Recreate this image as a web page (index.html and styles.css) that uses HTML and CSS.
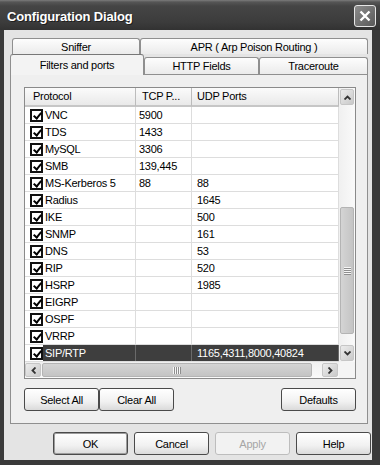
FILE: index.html
```html
<!DOCTYPE html>
<html lang="en">
<head>
  <meta charset="UTF-8">
  <title>Configuration Dialog</title>
  <link rel="stylesheet" href="styles.css">
</head>
<body>

  <div class="titlebar">
    <span class="title">Configuration Dialog</span>
    <div class="close">
      <svg width="12" height="12" viewBox="0 0 12 12"><path d="M1.5 1.5 L10.5 10.5 M10.5 1.5 L1.5 10.5" stroke="#fff" stroke-width="2.4" fill="none"/></svg>
    </div>
  </div>

  <div class="client">
    <div class="tabs">
      <div class="tab-row tab-row-back">
        <div class="tab tab-sniffer">Sniffer</div>
        <div class="tab tab-apr">APR ( Arp Poison Routing )</div>
      </div>
      <div class="tab-row tab-row-front">
        <div class="tab tab-filters">Filters and ports</div>
        <div class="tab tab-http">HTTP Fields</div>
        <div class="tab tab-trace">Traceroute</div>
      </div>
    </div>

    <div class="panel">
      <div class="list">
        <div class="view">
          <div class="list-head">
            <div class="head-cell head-name">Protocol</div>
            <div class="head-cell head-tcp">TCP P...</div>
            <div class="head-cell head-udp">UDP Ports</div>
          </div>

          <div class="row"><div class="cell cell-name"><span class="check"></span><span class="label">VNC</span></div><div class="cell cell-tcp">5900</div><div class="cell cell-udp"></div></div>
          <div class="row"><div class="cell cell-name"><span class="check"></span><span class="label">TDS</span></div><div class="cell cell-tcp">1433</div><div class="cell cell-udp"></div></div>
          <div class="row"><div class="cell cell-name"><span class="check"></span><span class="label">MySQL</span></div><div class="cell cell-tcp">3306</div><div class="cell cell-udp"></div></div>
          <div class="row"><div class="cell cell-name"><span class="check"></span><span class="label">SMB</span></div><div class="cell cell-tcp">139,445</div><div class="cell cell-udp"></div></div>
          <div class="row"><div class="cell cell-name"><span class="check"></span><span class="label">MS-Kerberos 5</span></div><div class="cell cell-tcp">88</div><div class="cell cell-udp">88</div></div>
          <div class="row"><div class="cell cell-name"><span class="check"></span><span class="label">Radius</span></div><div class="cell cell-tcp"></div><div class="cell cell-udp">1645</div></div>
          <div class="row"><div class="cell cell-name"><span class="check"></span><span class="label">IKE</span></div><div class="cell cell-tcp"></div><div class="cell cell-udp">500</div></div>
          <div class="row"><div class="cell cell-name"><span class="check"></span><span class="label">SNMP</span></div><div class="cell cell-tcp"></div><div class="cell cell-udp">161</div></div>
          <div class="row"><div class="cell cell-name"><span class="check"></span><span class="label">DNS</span></div><div class="cell cell-tcp"></div><div class="cell cell-udp">53</div></div>
          <div class="row"><div class="cell cell-name"><span class="check"></span><span class="label">RIP</span></div><div class="cell cell-tcp"></div><div class="cell cell-udp">520</div></div>
          <div class="row"><div class="cell cell-name"><span class="check"></span><span class="label">HSRP</span></div><div class="cell cell-tcp"></div><div class="cell cell-udp">1985</div></div>
          <div class="row"><div class="cell cell-name"><span class="check"></span><span class="label">EIGRP</span></div><div class="cell cell-tcp"></div><div class="cell cell-udp"></div></div>
          <div class="row"><div class="cell cell-name"><span class="check"></span><span class="label">OSPF</span></div><div class="cell cell-tcp"></div><div class="cell cell-udp"></div></div>
          <div class="row"><div class="cell cell-name"><span class="check"></span><span class="label">VRRP</span></div><div class="cell cell-tcp"></div><div class="cell cell-udp"></div></div>
          <div class="row row-selected"><div class="cell cell-name"><span class="check"></span><span class="label">SIP/RTP</span></div><div class="cell cell-tcp"></div><div class="cell cell-udp">1165,4311,8000,40824</div></div>
        </div>

        <div class="vscroll">
          <div class="sb-btn sb-btn-v">
            <svg width="7" height="5" viewBox="0 0 7 5"><polyline points="0.5,4.5 3.5,1.5 6.5,4.5" stroke="#333" stroke-width="1.8" fill="none"/></svg>
          </div>
          <div class="thumb-v"><span class="grip-v"></span></div>
          <div class="sb-btn sb-btn-v sb-down">
            <svg width="7" height="5" viewBox="0 0 7 5"><polyline points="0.5,0.5 3.5,3.5 6.5,0.5" stroke="#333" stroke-width="1.8" fill="none"/></svg>
          </div>
        </div>

        <div class="hscroll">
          <div class="sb-btn sb-btn-h sb-left">
            <svg width="5" height="7" viewBox="0 0 5 7"><polyline points="4.5,0.5 1.5,3.5 4.5,6.5" stroke="#333" stroke-width="1.8" fill="none"/></svg>
          </div>
          <div class="thumb-h"><span class="grip-h"></span></div>
          <div class="sb-btn sb-btn-h sb-right">
            <svg width="5" height="7" viewBox="0 0 5 7"><polyline points="0.5,0.5 3.5,3.5 0.5,6.5" stroke="#333" stroke-width="1.8" fill="none"/></svg>
          </div>
        </div>
        <div class="corner"></div>
      </div>

      <div class="panel-actions">
        <button class="btn">Select All</button>
        <button class="btn">Clear All</button>
        <button class="btn btn-push">Defaults</button>
      </div>
    </div>

    <div class="dialog-actions">
      <button class="btn btn-default">OK</button>
      <button class="btn">Cancel</button>
      <button class="btn btn-disabled">Apply</button>
      <button class="btn">Help</button>
    </div>
  </div>

</body>
</html>
```

FILE: styles.css
```css
* {
  box-sizing: border-box;
}

body {
  margin: 0;
  width: 380px;
  height: 465px;
  overflow: hidden;
  background-color: #3a3a3a;
  font-family: "Liberation Sans", Arial, sans-serif;
  font-size: 11px;
  letter-spacing: -0.25px;
  color: #000;
}

/* title bar */
.titlebar {
  height: 30px;
  display: flex;
  align-items: center;
  justify-content: space-between;
  padding: 0 4px 0 7px;
  background: linear-gradient(#7c7c7c 0, #565656 2px, #454545 6px, #3c3c3c 22px, #323232 30px);
}

.title {
  color: #fff;
  font-weight: bold;
  font-size: 13px;
  letter-spacing: -0.15px;
  padding-top: 2px;
  text-shadow: 1px 1px 0 #1e1e1e;
}

.close {
  width: 22px;
  height: 22px;
  margin-top: 2px;
  border: 1px solid #e6e6e6;
  border-radius: 3px;
  background: linear-gradient(135deg, #8c8c8c, #595959);
  display: flex;
  align-items: center;
  justify-content: center;
}

/* window body */
.client {
  height: 430px;
  margin: 0 8px 0 4px;
  padding: 8px 4px 0 6px;
  background-color: #e4e4e4;
}

/* tabs */
.tabs {
  width: 358px;
}

.tab-row {
  display: flex;
}

.tab-row-back {
  height: 16px;
  padding-left: 2px;
}

.tab-row-front {
  height: 20px;
  align-items: flex-end;
  position: relative;
  z-index: 1;
}

.tab {
  display: flex;
  align-items: center;
  justify-content: center;
  border: 1px solid #8f8f8f;
  border-bottom: none;
  border-radius: 3px 3px 0 0;
  background: linear-gradient(#fdfdfd, #ebebeb);
  white-space: nowrap;
}

.tab-row-back .tab {
  height: 16px;
}

.tab-sniffer {
  width: 128px;
}

.tab-apr {
  width: 228px;
}

.tab-filters {
  width: 134px;
  height: 21px;
  margin-bottom: -1px;
  background: #f3f3f3;
  border-top-color: #777;
}

.tab-http {
  width: 115px;
  height: 17px;
}

.tab-trace {
  width: 109px;
  height: 17px;
}

.panel {
  height: 350px;
  border: 1px solid #8f8f8f;
  background-color: #efefef;
  padding: 12px 11px 0 13px;
}

/* list view */
.list {
  width: 332px;
  height: 292px;
  border: 1px solid #8a8a8a;
  background-color: #fff;
  display: grid;
  grid-template-columns: 314px 16px;
  grid-template-rows: 274px 16px;
}

.view {
  overflow: hidden;
}

.list-head,
.row {
  display: grid;
  grid-template-columns: 111px 56px 147px;
}

.list-head {
  height: 19px;
}

.head-cell {
  line-height: 17px;
  background: linear-gradient(#fbfbfb, #e9e9e9);
  border-right: 1px solid #bcbcbc;
  border-bottom: 2px solid #c6c6c6;
  white-space: nowrap;
}

.head-name {
  padding-left: 8px;
}

.head-tcp {
  padding-left: 6px;
}

.head-udp {
  padding-left: 5px;
}

.row {
  height: 17px;
  border-bottom: 1px solid #dddddd;
}

.cell {
  line-height: 16px;
  border-right: 1px solid #dddddd;
  white-space: nowrap;
  overflow: hidden;
}

.cell-name {
  display: flex;
  align-items: center;
  padding-left: 5px;
}

.cell-tcp {
  padding-left: 3px;
}

.cell-udp {
  padding-left: 5px;
}

.check {
  position: relative;
  flex: none;
  width: 13px;
  height: 13px;
  border: 2px solid #111;
  background-color: #fff;
}

.check::after {
  content: "";
  position: absolute;
  left: 3px;
  top: 0;
  width: 3px;
  height: 6px;
  border: solid #000;
  border-width: 0 2px 2px 0;
  transform: rotate(40deg);
}

.label {
  flex: 1;
  align-self: stretch;
  padding-left: 2px;
}

.row-selected .label,
.row-selected .cell-tcp,
.row-selected .cell-udp {
  background-color: #3e3e3e;
  color: #fff;
}

.row-selected .cell {
  border-right-color: #6a6a6a;
}

/* scroll bars */
.vscroll {
  display: flex;
  flex-direction: column;
  padding: 1px;
  background: linear-gradient(90deg, #f0f0f0, #fafafa);
}

.hscroll {
  display: flex;
  padding: 1px 0 1px 0;
  background: linear-gradient(#f0f0f0, #fafafa);
}

.corner {
  background-color: #f4f4f4;
}

.sb-btn {
  display: flex;
  align-items: center;
  justify-content: center;
  border: 1px solid #c6c6c6;
  border-radius: 2px;
  background: linear-gradient(135deg, #ececec, #c9c9c9);
}

.sb-btn-v {
  height: 16px;
}

.sb-down {
  margin-top: auto;
}

.sb-btn-h {
  width: 16px;
}

.sb-right {
  margin-left: auto;
  margin-right: 1px;
}

.thumb-v {
  height: 127px;
  margin-top: 102px;
  border: 1px solid #b4b4b4;
  border-radius: 2px;
  background: linear-gradient(90deg, #d4d4d4, #c4c4c4);
  display: flex;
  align-items: center;
  justify-content: center;
}

.grip-v {
  width: 7px;
  height: 8px;
  background: repeating-linear-gradient(#f6f6f6 0 1px, #8e8e8e 1px 2px);
}

.thumb-h {
  width: 270px;
  margin-left: 1px;
  border: 1px solid #b4b4b4;
  border-radius: 2px;
  background: linear-gradient(#d4d4d4, #c4c4c4);
  display: flex;
  align-items: center;
  justify-content: center;
}

.grip-h {
  width: 8px;
  height: 7px;
  background: repeating-linear-gradient(90deg, #f6f6f6 0 1px, #8e8e8e 1px 2px);
}

/* buttons */
.panel-actions {
  display: flex;
  width: 332px;
  margin-top: 9px;
}

.btn {
  width: 75px;
  height: 23px;
  padding: 0;
  border: 1px solid #4a4a4a;
  border-radius: 3px;
  background: linear-gradient(#ffffff, #f1f1f1 60%, #dadada);
  font-family: inherit;
  font-size: 11px;
  letter-spacing: -0.25px;
  color: #000;
}

.btn-push {
  margin-left: auto;
}

.btn-default {
  box-shadow: inset 0 0 0 1px #9c9c9c;
}

.btn-disabled {
  color: #a6a6a6;
  border-color: #bdbdbd;
  background: #f2f2f2;
}

.dialog-actions {
  display: flex;
  justify-content: flex-end;
  gap: 6px;
  margin-top: 8px;
  margin-right: -3px;
}
```
